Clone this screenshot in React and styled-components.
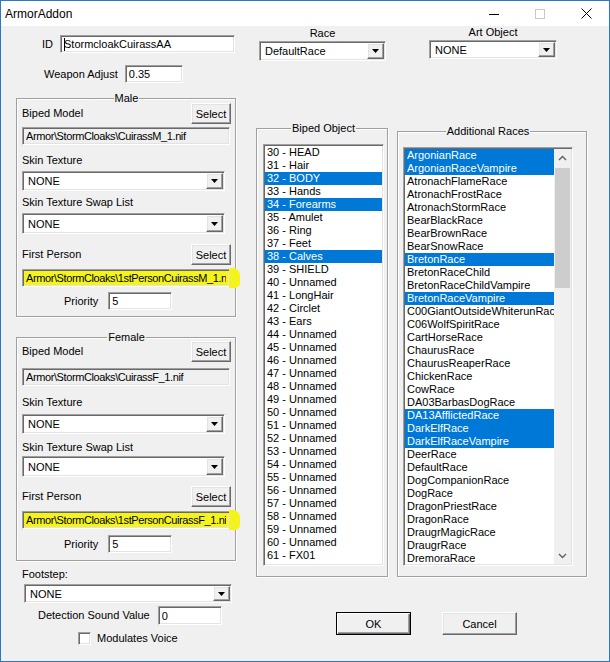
import React from 'react';
import styled, { createGlobalStyle, css } from 'styled-components';

const GlobalStyle = createGlobalStyle`
  html, body {
    margin: 0;
    padding: 0;
    background: #fff;
  }
  body {
    font-family: "Liberation Sans", Arial, sans-serif;
    font-size: 11px;
    color: #000;
  }
  * {
    box-sizing: border-box;
  }
`;

const sunken = css`
  border: 1px solid;
  border-color: #a0a0a0 #fff #fff #a0a0a0;
  box-shadow: inset 1px 1px 0 #696969, inset -1px -1px 0 #e3e3e3;
`;

const raised = css`
  border: 1px solid;
  border-color: #fff #696969 #696969 #fff;
  box-shadow: inset -1px -1px 0 #a0a0a0, inset 1px 1px 0 #e3e3e3;
  background: #f0f0f0;
`;

const Window = styled.div`
  width: 610px;
  height: 662px;
  border: 1px solid #2b78c5;
  background: #f0f0f0;
  display: flex;
  flex-direction: column;
  overflow: hidden;
`;

const TitleBar = styled.div`
  height: 25px;
  flex-shrink: 0;
  background: #fff;
  display: flex;
  align-items: center;
`;

const Title = styled.span`
  flex: 1;
  padding-left: 4px;
  font-size: 12px;
`;

const Caption = styled.div`
  width: 46px;
  height: 25px;
  display: flex;
  align-items: center;
  justify-content: center;
`;

const Body = styled.div`
  display: flex;
  padding-left: 15px;
`;

const LeftColumn = styled.div`
  width: 220px;
  display: flex;
  flex-direction: column;
`;

const Row = styled.div`
  display: flex;
  align-items: center;
  margin-top: ${(p) => p.$mt || 0}px;
  padding-left: ${(p) => p.$pl || 0}px;
  gap: ${(p) => p.$gap ?? 8}px;
`;

const HeaderRow = styled.div`
  display: flex;
  align-items: center;
  justify-content: space-between;
  height: 21px;
  margin-top: ${(p) => p.$mt || 0}px;
`;

const Label = styled.div`
  line-height: 13px;
  white-space: nowrap;
  margin-top: ${(p) => p.$mt || 0}px;
  padding-left: ${(p) => p.$pl || 0}px;
  text-align: ${(p) => (p.$center ? 'center' : 'left')};
`;

const TextBox = styled.div`
  ${sunken};
  background: ${(p) => (p.$readonly ? '#f0f0f0' : '#fff')};
  width: ${(p) => p.$w}px;
  height: ${(p) => p.$h || 18}px;
  margin-top: ${(p) => p.$mt || 0}px;
  padding: 0 3px;
  display: flex;
  align-items: center;
  white-space: nowrap;
  overflow: hidden;
`;

const HighlightBox = styled(TextBox)`
  position: relative;
  overflow: visible;
  background: #f4f41c;

  &::after {
    content: '';
    position: absolute;
    left: 100%;
    top: -2px;
    width: 11px;
    height: calc(100% + 4px);
    background: #f4f41c;
    border-radius: 0 7px 5px 0;
  }
`;

const Clip = styled.span`
  overflow: hidden;
  white-space: nowrap;
  flex: 1;
  position: relative;
  z-index: 1;
  letter-spacing: ${(p) => (p.$tight ? '-0.4px' : 'normal')};
`;

const Caret = styled.span`
  width: 1px;
  height: 13px;
  background: #000;
  margin-right: -1px;
  flex-shrink: 0;
`;

const Combo = styled.div`
  ${sunken};
  background: #fff;
  width: ${(p) => p.$w}px;
  height: ${(p) => p.$h || 20}px;
  margin-top: ${(p) => p.$mt || 0}px;
  margin-left: ${(p) => p.$ml || 0}px;
  padding: 1px;
  display: flex;
  align-items: stretch;
  flex-shrink: 0;
`;

const ComboText = styled.span`
  flex: 1;
  padding-left: 4px;
  display: flex;
  align-items: center;
  white-space: nowrap;
  overflow: hidden;
`;

const DropButton = styled.span`
  ${raised};
  width: 17px;
  display: flex;
  align-items: center;
  justify-content: center;
`;

const Button = styled.button`
  ${raised};
  font: inherit;
  color: #000;
  width: ${(p) => p.$w || 40}px;
  height: ${(p) => p.$h || 21}px;
  padding: 0;
  ${(p) =>
    p.$default &&
    css`
      border: 1px solid #000;
      box-shadow: inset 1px 1px 0 #fff, inset -1px -1px 0 #696969, inset -2px -2px 0 #a0a0a0;
    `}
`;

const Group = styled.div`
  border: 1px solid #a0a0a0;
  box-shadow: inset 1px 1px 0 #fff, 1px 1px 0 #fff;
  display: flex;
  flex-direction: column;
  width: ${(p) => p.$w}px;
  margin-top: ${(p) => p.$mt || 0}px;
  margin-left: ${(p) => p.$ml || 0}px;
  padding: 0 ${(p) => p.$pr ?? 4}px ${(p) => p.$pb || 0}px ${(p) => p.$pl ?? 5}px;
`;

const Legend = styled.div`
  align-self: center;
  margin: -7px 0 -6px;
  padding: 0 1px;
  line-height: 13px;
  background: #f0f0f0;
  white-space: nowrap;
`;

const CheckBox = styled.span`
  ${sunken};
  width: 13px;
  height: 13px;
  background: #fff;
`;

const RightArea = styled.div`
  display: flex;
  flex-direction: column;
  margin-left: 20px;
  width: 331px;
`;

const TopRow = styled.div`
  display: flex;
  align-items: flex-start;
`;

const Field = styled.div`
  display: flex;
  flex-direction: column;
  gap: 1px;
  margin-top: ${(p) => p.$mt || 0}px;
  margin-left: ${(p) => p.$ml || 0}px;
`;

const GroupsRow = styled.div`
  display: flex;
  align-items: stretch;
  margin-top: 67px;
`;

const ListBox = styled.div`
  ${sunken};
  background: #fff;
  width: ${(p) => p.$w}px;
  height: ${(p) => p.$h}px;
  margin-top: 15px;
  padding: 1px;
  display: flex;
  overflow: hidden;
`;

const Items = styled.div`
  flex: 1;
  min-width: 0;
  overflow: hidden;
`;

const Item = styled.div`
  height: 13px;
  line-height: 13px;
  padding-left: 2px;
  white-space: nowrap;
  overflow: hidden;
  background: ${(p) => (p.$selected ? '#0078d7' : 'transparent')};
  color: ${(p) => (p.$selected ? '#fff' : '#000')};
`;

const ScrollBar = styled.div`
  width: 17px;
  flex-shrink: 0;
  background: #f0f0f0;
  display: flex;
  flex-direction: column;
`;

const ScrollArrow = styled.div`
  height: 17px;
  display: flex;
  align-items: center;
  justify-content: center;
`;

const Track = styled.div`
  flex: 1;
  padding: 2px 1px 0;
`;

const Thumb = styled.div`
  height: 120px;
  background: #cdcdcd;
`;

const ButtonRow = styled.div`
  display: flex;
  gap: 31px;
  margin-top: 35px;
  padding-left: 80px;
`;

const Arrow = () => (
  <svg width="7" height="4" viewBox="0 0 7 4">
    <polygon points="0,0 7,0 3.5,4" fill="#000" />
  </svg>
);

const Chevron = ({ down }) => (
  <svg width="9" height="6" viewBox="0 0 9 6">
    <polyline
      points={down ? '1,1 4.5,4.5 8,1' : '1,5 4.5,1.5 8,5'}
      fill="none"
      stroke="#606060"
      strokeWidth="1.4"
    />
  </svg>
);

function ComboBox({ value, ...rest }) {
  return (
    <Combo {...rest}>
      <ComboText>{value}</ComboText>
      <DropButton>
        <Arrow />
      </DropButton>
    </Combo>
  );
}

const BIPED_NAMES = {
  30: 'HEAD',
  31: 'Hair',
  32: 'BODY',
  33: 'Hands',
  34: 'Forearms',
  35: 'Amulet',
  36: 'Ring',
  37: 'Feet',
  38: 'Calves',
  39: 'SHIELD',
  41: 'LongHair',
  42: 'Circlet',
  43: 'Ears',
  61: 'FX01',
};
const BIPED_SELECTED = [32, 34, 38];
const biped = Array.from({ length: 32 }, (_, i) => {
  const n = 30 + i;
  return { label: `${n} - ${BIPED_NAMES[n] || 'Unnamed'}`, selected: BIPED_SELECTED.includes(n) };
});

const RACES = [
  'ArgonianRace', 'ArgonianRaceVampire', 'AtronachFlameRace', 'AtronachFrostRace',
  'AtronachStormRace', 'BearBlackRace', 'BearBrownRace', 'BearSnowRace', 'BretonRace',
  'BretonRaceChild', 'BretonRaceChildVampire', 'BretonRaceVampire',
  'C00GiantOutsideWhiterunRace', 'C06WolfSpiritRace', 'CartHorseRace', 'ChaurusRace',
  'ChaurusReaperRace', 'ChickenRace', 'CowRace', 'DA03BarbasDogRace', 'DA13AfflictedRace',
  'DarkElfRace', 'DarkElfRaceVampire', 'DeerRace', 'DefaultRace', 'DogCompanionRace',
  'DogRace', 'DragonPriestRace', 'DragonRace', 'DraugrMagicRace', 'DraugrRace', 'DremoraRace',
];
const RACES_SELECTED = [
  'ArgonianRace', 'ArgonianRaceVampire', 'BretonRace', 'BretonRaceVampire',
  'DA13AfflictedRace', 'DarkElfRace', 'DarkElfRaceVampire',
];

// per-group vertical offsets, the two boxes are not spaced quite the same
const MALE_GAPS = [4, 3, 9, 4, 5, 4, 10, 4, 5, 6];
const FEMALE_GAPS = [3, 6, 10, 5, 7, 2, 9, 4, 6, 7];

function SexGroup({ title, model, firstPerson, gaps, mt }) {
  return (
    <Group $w={220} $mt={mt} $pb={gaps[9]}>
      <Legend>{title}</Legend>
      <HeaderRow $mt={gaps[0]}>
        <Label>Biped Model</Label>
        <Button>Select</Button>
      </HeaderRow>
      <TextBox $readonly $w={208} $mt={gaps[1]}>
        <Clip $tight>{model}</Clip>
      </TextBox>
      <Label $mt={gaps[2]}>Skin Texture</Label>
      <ComboBox value="NONE" $w={203} $mt={gaps[3]} />
      <Label $mt={gaps[4]}>Skin Texture Swap List</Label>
      <ComboBox value="NONE" $w={203} $h={21} $mt={gaps[5]} />
      <HeaderRow $mt={gaps[6]}>
        <Label>First Person</Label>
        <Button>Select</Button>
      </HeaderRow>
      <HighlightBox $w={208} $mt={gaps[7]}>
        <Clip $tight>{firstPerson}</Clip>
      </HighlightBox>
      <Row $mt={gaps[8]} $pl={42} $gap={10}>
        <Label>Priority</Label>
        <TextBox $w={64}>5</TextBox>
      </Row>
    </Group>
  );
}

export default function App() {
  return (
    <>
      <GlobalStyle />
      <Window>
        <TitleBar>
          <Title>ArmorAddon</Title>
          <Caption>
            <svg width="10" height="10" viewBox="0 0 10 10">
              <line x1="0" y1="5.5" x2="10" y2="5.5" stroke="#000" strokeWidth="1" />
            </svg>
          </Caption>
          <Caption>
            <svg width="10" height="10" viewBox="0 0 10 10">
              <rect x="0.5" y="0.5" width="9" height="9" fill="none" stroke="#c8c8c8" strokeWidth="1" />
            </svg>
          </Caption>
          <Caption>
            <svg width="11" height="11" viewBox="0 0 11 11">
              <path d="M0.5 0.5 L10.5 10.5 M10.5 0.5 L0.5 10.5" stroke="#000" strokeWidth="1" />
            </svg>
          </Caption>
        </TitleBar>

        <Body>
          <LeftColumn>
            <Row $mt={9} $pl={26} $gap={7}>
              <Label>ID</Label>
              <TextBox $w={175}>
                <Caret />
                <Clip>StormcloakCuirassAA</Clip>
              </TextBox>
            </Row>
            <Row $mt={12} $pl={28} $gap={7}>
              <Label>Weapon Adjust</Label>
              <TextBox $w={58}>0.35</TextBox>
            </Row>

            <SexGroup
              title="Male"
              mt={15}
              gaps={MALE_GAPS}
              model="Armor\StormCloaks\CuirassM_1.nif"
              firstPerson="Armor\StormCloaks\1stPersonCuirassM_1.nif"
            />
            <SexGroup
              title="Female"
              mt={20}
              gaps={FEMALE_GAPS}
              model="Armor\StormCloaks\CuirassF_1.nif"
              firstPerson="Armor\StormCloaks\1stPersonCuirassF_1.nif"
            />

            <Label $mt={7} $pl={6}>Footstep:</Label>
            <ComboBox value="NONE" $w={208} $h={19} $ml={8} $mt={3} />
            <Row $mt={3} $pl={22} $gap={8}>
              <Label>Detection Sound Value</Label>
              <TextBox $w={64} $h={19}>0</TextBox>
            </Row>
            <Row $mt={7} $pl={62} $gap={6}>
              <CheckBox />
              <Label>Modulates Voice</Label>
            </Row>
          </LeftColumn>

          <RightArea>
            <TopRow>
              <Field $ml={3} $mt={1}>
                <Label $center>Race</Label>
                <ComboBox value="DefaultRace" $w={127} />
              </Field>
              <Field $ml={43}>
                <Label $center>Art Object</Label>
                <ComboBox value="NONE" $w={128} $h={19} />
              </Field>
            </TopRow>

            <GroupsRow>
              <Group $w={132} $pl={6} $pr={3} $pb={10}>
                <Legend>Biped Object</Legend>
                <ListBox $w={121} $h={422}>
                  <Items>
                    {biped.map((b) => (
                      <Item key={b.label} $selected={b.selected}>
                        {b.label}
                      </Item>
                    ))}
                  </Items>
                </ListBox>
              </Group>
              <Group $w={190} $ml={9} $mt={3} $pl={5} $pr={13}>
                <Legend>Additional Races</Legend>
                <ListBox $w={170} $h={419}>
                  <Items>
                    {RACES.map((r) => (
                      <Item key={r} $selected={RACES_SELECTED.includes(r)}>
                        {r}
                      </Item>
                    ))}
                  </Items>
                  <ScrollBar>
                    <ScrollArrow>
                      <Chevron />
                    </ScrollArrow>
                    <Track>
                      <Thumb />
                    </Track>
                    <ScrollArrow>
                      <Chevron down />
                    </ScrollArrow>
                  </ScrollBar>
                </ListBox>
              </Group>
            </GroupsRow>

            <ButtonRow>
              <Button $default $w={75} $h={23}>OK</Button>
              <Button $w={75} $h={23}>Cancel</Button>
            </ButtonRow>
          </RightArea>
        </Body>
      </Window>
    </>
  );
}
